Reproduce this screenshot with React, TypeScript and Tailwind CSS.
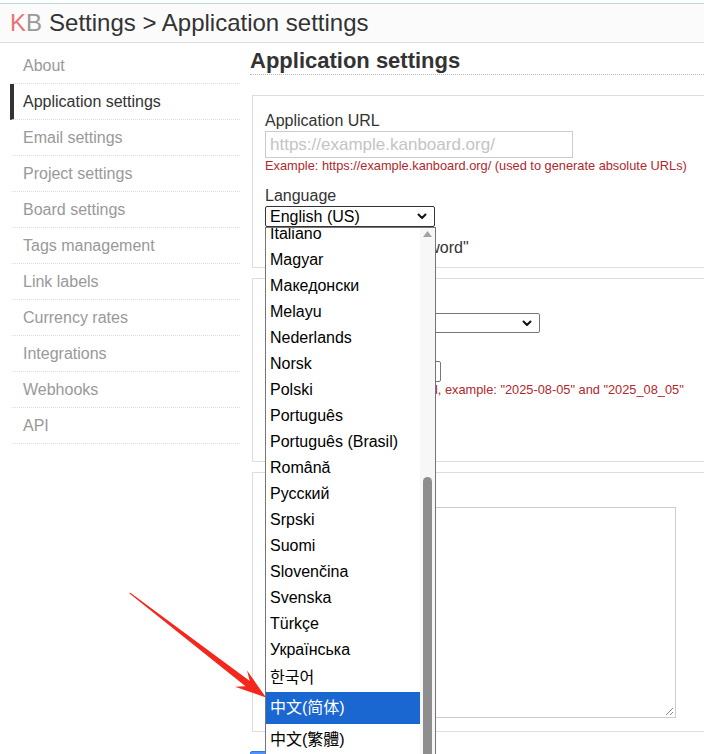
import { useState } from "react";

const menu = [
  "About",
  "Application settings",
  "Email settings",
  "Project settings",
  "Board settings",
  "Tags management",
  "Link labels",
  "Currency rates",
  "Integrations",
  "Webhooks",
  "API",
];

type Lang = { label: string; cjk?: "kr" | "sc" | "tc" };

const languages: Lang[] = [
  { label: "Italiano" },
  { label: "Magyar" },
  { label: "Македонски" },
  { label: "Melayu" },
  { label: "Nederlands" },
  { label: "Norsk" },
  { label: "Polski" },
  { label: "Português" },
  { label: "Português (Brasil)" },
  { label: "Română" },
  { label: "Русский" },
  { label: "Srpski" },
  { label: "Suomi" },
  { label: "Slovenčina" },
  { label: "Svenska" },
  { label: "Türkçe" },
  { label: "Українська" },
  { label: "한국어", cjk: "kr" },
  { label: "中文(简体)", cjk: "sc" },
  { label: "中文(繁體)", cjk: "tc" },
];

function Chevron() {
  return (
    <svg width="10" height="7" viewBox="0 0 10 7" className="shrink-0">
      <path d="M1.5 1.5 5 5l3.5-3.5" fill="none" stroke="#111" strokeWidth="2" strokeLinecap="round" strokeLinejoin="round" />
    </svg>
  );
}

function FakeSelect({ value, className }: { value?: string; className: string }) {
  return (
    <div className={`flex items-center justify-between bg-white pl-[4px] pr-[7px] text-[16px] leading-none text-black ${className}`}>
      <span>{value}</span>
      <Chevron />
    </div>
  );
}

function LanguageList() {
  const [selected] = useState("中文(简体)");

  return (
    <div className="absolute left-[265px] top-[227px] flex h-[540px] w-[171px] overflow-hidden border border-[#767676] bg-white">
      <ul className="mt-[-7px] flex-1">
        {languages.map((lang) => {
          const active = lang.label === selected;
          const height = lang.cjk === "kr" ? "h-[29px] leading-[29px]" : lang.cjk ? "h-[32px] leading-[32px]" : "h-[26px] leading-[26px]";
          const font =
            lang.cjk === "kr"
              ? "font-['Liberation_Sans','Noto_Sans_CJK_KR',sans-serif]"
              : lang.cjk === "tc"
                ? "font-['Liberation_Sans','Noto_Sans_CJK_TC',sans-serif]"
                : "font-['Liberation_Sans','Noto_Sans_CJK_SC',sans-serif]";
          return (
            <li
              key={lang.label}
              className={`${height} ${font} whitespace-nowrap pl-[4px] text-[16px] ${active ? "bg-[#1a67d2] text-white" : "text-black"}`}
            >
              {lang.label}
            </li>
          );
        })}
      </ul>
      <div className="flex w-[15px] flex-col bg-[#f7f7f7]">
        <div className="flex h-[14px] items-start justify-center pt-[3px] pr-[1px]">
          <svg width="9" height="6" viewBox="0 0 9 6">
            <path d="M4.5 0 9 6H0z" fill="#a3a3a3" />
          </svg>
        </div>
        <div className="h-[235px]" />
        <div className="ml-[3px] w-[9px] flex-1 rounded-t-full bg-[#8e8e8e]" />
      </div>
    </div>
  );
}

function Arrow() {
  return (
    <svg className="pointer-events-none absolute left-0 top-0" width="704" height="754" viewBox="0 0 704 754">
      <polygon points="130,592.4 249.8,681 247,670.6 266,697.5 235,686.8 245.5,686.3 129.5,593.5" fill="#f5261c" />
    </svg>
  );
}

export default function App() {
  return (
    <div className="relative h-[754px] w-[704px] overflow-hidden bg-white font-['Liberation_Sans',Arial,sans-serif] text-[#333]">
      <div className="h-[3px]" />
      <header className="flex h-[40px] items-center border-y border-t-[#b5dcd9] border-b-[#ddd] bg-[#fbfbfb] px-[10px] text-[24px] leading-none text-[#333]">
        <span className="text-[#e87474]">K</span>
        <span className="text-[#999]">B</span>
        <span className="ml-[7px]">Settings &gt; Application settings</span>
      </header>

      <div className="flex">
        <nav className="ml-[10px] mt-[5px] w-[230px] shrink-0">
          <ul>
            {menu.map((item) => {
              const active = item === "Application settings";
              return (
                <li
                  key={item}
                  className={`h-[36px] border-b border-l-4 border-b-[#ddd] border-dotted pl-[9px] text-[16px] leading-[35px] ${
                    active ? "border-l-[#333] text-[#333]" : "border-l-transparent text-[#999]"
                  }`}
                  style={{ borderLeftStyle: "solid" }}
                >
                  {item}
                </li>
              );
            })}
          </ul>
        </nav>

        <main className="ml-[10px] w-[520px] shrink-0">
          <h2 className="mt-[4px] border-b border-dotted border-b-[#bbb] text-[22px] font-bold leading-[27px] text-[#333]">
            Application settings
          </h2>

          <section className="ml-[2px] mt-[20px] border border-[#ddd] pb-[10px] pl-[12px] pt-[16px]">
            <label className="block text-[16px] leading-[18px]">Application URL</label>
            <div className="mt-[1px] flex h-[27px] w-[308px] items-center border border-[#ccc] pl-[4px] text-[17px] text-[#c4c4c4]">
              https://example.kanboard.org/
            </div>
            <p className="text-[12.8px] leading-[16px] text-[#b0282c]">
              Example: https://example.kanboard.org/ (used to generate absolute URLs)
            </p>
            <label className="mt-[13px] block text-[16px] leading-[18px]">Language</label>
            <FakeSelect value="English (US)" className="mt-[1px] h-[21px] w-[170px] rounded-[2px] border border-[#333]" />
            <label className="mt-[12px] flex items-center gap-[4px] text-[16px] leading-[18px]">
              <span className="inline-block h-[13px] w-[13px] rounded-[2px] border border-[#767676]" />
              Enable "Forget Password"
            </label>
          </section>

          <section className="ml-[2px] mt-[10px] border border-[#ddd] pb-[15px] pl-[12px] pt-[10px]">
            <label className="block text-[16px] leading-[18px]">Timezone</label>
            <FakeSelect className="mt-[6px] h-[20px] w-[275px] rounded-[2px] border border-[#767676]" />
            <label className="mt-[10px] block text-[16px] leading-[18px]">Date format</label>
            <FakeSelect className="h-[21px] w-[176px] rounded-[2px] border border-[#767676]" />
            <p className="whitespace-nowrap text-[12.8px] leading-[16px] text-[#b0282c]">
              ISO format is always accepted, example: "2025-08-05" and "2025_08_05"
            </p>
            <label className="mt-[10px] block text-[16px] leading-[18px]">Time format</label>
            <FakeSelect className="h-[20px] w-[150px] rounded-[2px] border border-[#767676]" />
          </section>

          <section className="ml-[2px] mt-[10px] border border-[#ddd] pb-[13px] pl-[12px] pt-[12px]">
            <label className="block text-[16px] leading-[18px]">Custom Stylesheet</label>
            <div className="relative mt-[4px] h-[211px] w-[411px] border border-[#ccc] bg-white">
              <svg className="absolute bottom-[1px] right-[1px]" width="9" height="9" viewBox="0 0 9 9">
                <path d="M8 1 1 8M8 5 5 8" stroke="#888" strokeWidth="1" />
              </svg>
            </div>
          </section>

          <button className="mt-[19px] h-[30px] rounded-[2px] border border-[#3079ed] bg-[#4d90fe] px-[10px] text-[14px] text-white">
            Save
          </button>
        </main>
      </div>

      <LanguageList />
      <Arrow />
    </div>
  );
}
